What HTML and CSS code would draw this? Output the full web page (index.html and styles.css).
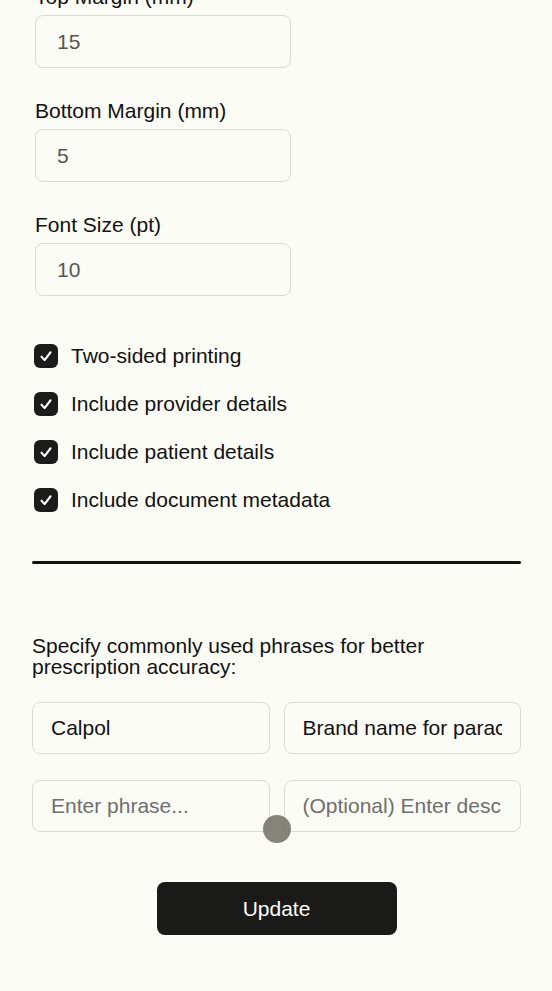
FILE: index.html
```html
<!DOCTYPE html>
<html lang="en">
<head>
    <meta charset="UTF-8">
    <meta name="viewport" content="width=device-width, initial-scale=1.0">
    <title>Print Settings</title>
    <link rel="stylesheet" href="styles.css">
</head>
<body>
<main class="settings">
    <!-- Page margins and font -->
    <section class="print-fields">
        <div class="field">
            <label for="top-margin">Top Margin (mm)</label>
            <input type="text" id="top-margin" class="num-input" value="15">
        </div>
        <div class="field">
            <label for="bottom-margin">Bottom Margin (mm)</label>
            <input type="text" id="bottom-margin" class="num-input" value="5">
        </div>
        <div class="field">
            <label for="font-size">Font Size (pt)</label>
            <input type="text" id="font-size" class="num-input" value="10">
        </div>

        <div class="check-list">
            <label class="check-row"><span class="check-box"><svg viewBox="0 0 24 24" width="20" height="20"><path d="M6.5 12.8l3.8 4.2 7.2-9.5" fill="none" stroke="#fff" stroke-width="2.5" stroke-linecap="round" stroke-linejoin="round"/></svg></span>Two-sided printing</label>
            <label class="check-row"><span class="check-box"><svg viewBox="0 0 24 24" width="20" height="20"><path d="M6.5 12.8l3.8 4.2 7.2-9.5" fill="none" stroke="#fff" stroke-width="2.5" stroke-linecap="round" stroke-linejoin="round"/></svg></span>Include provider details</label>
            <label class="check-row"><span class="check-box"><svg viewBox="0 0 24 24" width="20" height="20"><path d="M6.5 12.8l3.8 4.2 7.2-9.5" fill="none" stroke="#fff" stroke-width="2.5" stroke-linecap="round" stroke-linejoin="round"/></svg></span>Include patient details</label>
            <label class="check-row"><span class="check-box"><svg viewBox="0 0 24 24" width="20" height="20"><path d="M6.5 12.8l3.8 4.2 7.2-9.5" fill="none" stroke="#fff" stroke-width="2.5" stroke-linecap="round" stroke-linejoin="round"/></svg></span>Include document metadata</label>
        </div>
    </section>

    <hr class="divider">

    <!-- Custom phrases -->
    <section class="phrases">
        <p class="phrases-intro">Specify commonly used phrases for better prescription accuracy:</p>
        <div class="phrase-grid">
            <input type="text" class="phrase-input" value="Calpol">
            <input type="text" class="phrase-input" value="Brand name for paracetamol">
            <input type="text" class="phrase-input" placeholder="Enter phrase...">
            <div class="phrase-cell">
                <input type="text" class="phrase-input" placeholder="(Optional) Enter description">
                <span class="touch-dot"></span>
            </div>
        </div>
        <div class="actions">
            <button class="update-button">Update</button>
        </div>
    </section>
</main>
</body>
</html>
```

FILE: styles.css
```css
body {
    margin: 0;
    font-family: "Liberation Sans", Arial, sans-serif;
    color: #111;
    background-color: #fcfcf6;
}

.settings {
    margin-top: -15px;
    padding: 0 31px 0 32px;
}

/* Margin / font fields */
.print-fields {
    padding-left: 3px;
}

.field {
    display: flex;
    flex-direction: column;
    margin-bottom: 31px;
}

.field label {
    font-size: 21px;
    line-height: 24px;
    margin-bottom: 6px;
}

.num-input {
    box-sizing: border-box;
    width: 256px;
    height: 53px;
    padding: 0 21px;
    border: 1px solid #dadad6;
    border-radius: 8px;
    background: transparent;
    font-family: inherit;
    font-size: 21px;
    color: #555;
    outline: none;
}

/* Checkboxes */
.check-list {
    display: flex;
    flex-direction: column;
    gap: 24px;
    margin-top: 48px; /* collapses with the field margin above */
}

.check-row {
    display: flex;
    align-items: center;
    gap: 13px;
    font-size: 21px;
    line-height: 24px;
}

.check-box {
    display: flex;
    align-items: center;
    justify-content: center;
    width: 24px;
    height: 24px;
    margin-left: -1px;
    border-radius: 6px;
    background-color: #1c1c1a;
}

.divider {
    margin: 49px 0 0;
    height: 3px;
    border: none;
    border-radius: 2px;
    background-color: #111;
}

/* Phrases section */
.phrases-intro {
    margin: 71px 0 25px;
    font-size: 21px;
    line-height: 21px;
    padding-right: 50px;
}

.phrase-grid {
    display: grid;
    grid-template-columns: 1fr 1fr;
    column-gap: 14px;
    row-gap: 26px;
}

.phrase-cell {
    position: relative;
}

.phrase-input {
    box-sizing: border-box;
    width: 100%;
    height: 52px;
    padding: 0 18px;
    border: 1px solid #dadad6;
    border-radius: 8px;
    background: transparent;
    font-family: inherit;
    font-size: 21px;
    color: #111;
    outline: none;
}

.phrase-input::placeholder {
    color: #6e6e6e;
}

/* touch indicator over the field */
.touch-dot {
    position: absolute;
    left: -21px;
    top: 35px;
    width: 28px;
    height: 28px;
    border-radius: 50%;
    background-color: rgba(110, 110, 100, 0.85);
}

.actions {
    display: flex;
    justify-content: center;
    margin-top: 50px;
}

.update-button {
    width: 240px;
    height: 53px;
    border: none;
    border-radius: 8px;
    background-color: #1a1a18;
    color: #fff;
    font-family: inherit;
    font-size: 21px;
    cursor: pointer;
}
```
